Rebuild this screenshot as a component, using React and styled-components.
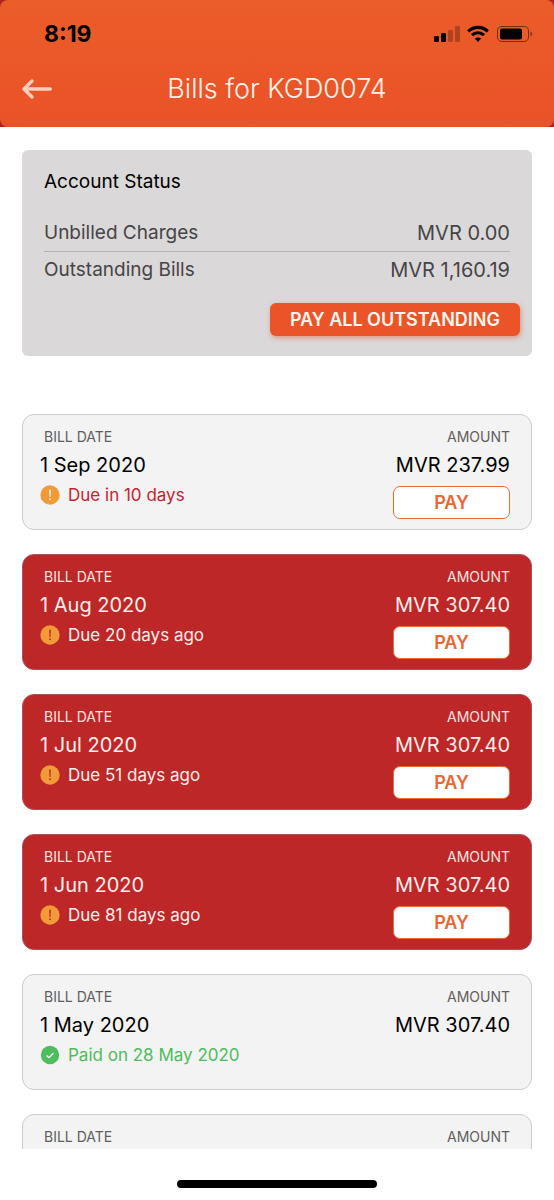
import styled, { createGlobalStyle } from "styled-components";

const GlobalStyle = createGlobalStyle`
  * {
    box-sizing: border-box;
  }

  body {
    margin: 0;
    background: #fff;
    color: #000;
    font-family: Inter, "Liberation Sans", sans-serif;
  }

  h1, h2, ul, dl, dd {
    margin: 0;
    padding: 0;
  }

  button {
    margin: 0;
    font-family: inherit;
    cursor: pointer;
  }
`;

const Screen = styled.div`
  display: flex;
  flex-direction: column;
  height: 100vh;
`;

const HeaderBackdrop = styled.div`
  flex: none;
  background: #b02420;
`;

const Header = styled.header`
  padding-bottom: 14px;
  border-radius: 8px;
  background: linear-gradient(#eb5d29, #ea5228);
`;

const StatusBar = styled.div`
  display: flex;
  align-items: center;
  justify-content: space-between;
  height: 65px;
  padding: 3px 21px 0 44px;
`;

const Clock = styled.span`
  font-size: 23px;
  line-height: 28px;
  font-weight: 700;
`;

const StatusIcons = styled.div`
  display: flex;
  align-items: center;
  gap: 7px;
`;

const NavBar = styled.div`
  display: grid;
  grid-template-columns: 32px 1fr 32px;
  align-items: center;
  height: 48px;
  padding: 0 21px;
`;

const BackButton = styled.button`
  display: flex;
  padding: 0;
  border: none;
  background: none;
  color: #ffcdbd;
`;

const Title = styled.h1`
  font-size: 27px;
  line-height: 36px;
  font-weight: 300;
  text-align: center;
  white-space: nowrap;
  color: #fff3ec;
`;

const Content = styled.main`
  flex: 1;
  min-height: 0;
  overflow: hidden;
  padding: 23px 22px 0;
`;

const AccountPanel = styled.section`
  padding: 18px 22px 20px;
  border-radius: 6px;
  background: #dad8d9;
`;

const PanelTitle = styled.h2`
  margin-bottom: 19px;
  font-size: 19px;
  line-height: 28px;
  font-weight: 400;
`;

const ChargeRow = styled.div`
  display: flex;
  justify-content: space-between;
  padding: 4px 0;
  font-size: 19px;
  line-height: 28px;
  color: #464445;

  & + & {
    border-top: 1px solid #b4b3b4;
  }
`;

const ChargeAmount = styled.dd`
  font-size: 20px;
`;

const PanelActions = styled.div`
  display: flex;
  justify-content: flex-end;
  margin: 15px -10px 0 0;
`;

const PayAllButton = styled.button`
  height: 33px;
  padding: 0 20px;
  border: none;
  border-radius: 6px;
  background: #ea5428;
  box-shadow: 1px 2px 5px rgba(234, 84, 40, 0.5);
  font-size: 18px;
  font-weight: 600;
  white-space: nowrap;
  color: #fff6ef;
`;

const BillList = styled.ul`
  display: flex;
  flex-direction: column;
  gap: 24px;
  margin-top: 58px;
  list-style: none;
`;

const Card = styled.li`
  display: flex;
  justify-content: space-between;
  min-height: 116px;
  padding: 12px 21px 10px 17px;
  border: 1px solid ${({ $overdue }) => ($overdue ? "#b0505a" : "#cdcccd")};
  border-radius: 12px;
  background: ${({ $overdue }) => ($overdue ? "#bd2727" : "#f3f3f3")};
  color: ${({ $overdue }) => ($overdue ? "#ffefec" : "#000")};
`;

const Column = styled.div`
  display: flex;
  flex-direction: column;
  align-items: ${({ $end }) => ($end ? "flex-end" : "flex-start")};
`;

const Label = styled.span`
  padding-left: 4px;
  font-size: 14px;
  line-height: 20px;
  color: ${({ $overdue }) => ($overdue ? "#ffe4e0" : "#5f5d5e")};
`;

const Value = styled.span`
  margin-top: 4px;
  font-size: 20px;
  line-height: 28px;
`;

const statusColors = {
  due: "#bf2530",
  overdue: "#ffefec",
  paid: "#4fbc5e",
};

const Status = styled.span`
  display: flex;
  align-items: center;
  gap: 8px;
  margin-top: 4px;
  font-size: 17px;
  line-height: 24px;
  color: ${({ $status }) => statusColors[$status]};
`;

const PayButton = styled.button`
  width: 117px;
  height: 33px;
  margin-top: 7px;
  padding: 0;
  border: 1px solid #ee6a33;
  border-radius: 7px;
  background: #fff;
  font-size: 18px;
  font-weight: 600;
  color: #ec6530;
`;

const HomeArea = styled.footer`
  display: flex;
  flex: none;
  justify-content: center;
  align-items: flex-end;
  height: 51px;
  padding-bottom: 12px;
`;

const HomeIndicator = styled.div`
  width: 36%;
  height: 8px;
  border-radius: 4px;
  background: #000;
`;

const SignalIcon = () => (
  <svg width="26" height="18" viewBox="0 0 26 18" aria-hidden="true">
    <rect x="0" y="11" width="5" height="6" rx="1.2" />
    <rect x="7" y="8" width="5" height="9" rx="1.2" />
    <rect x="14" y="5" width="5" height="12" rx="1.2" opacity="0.25" />
    <rect x="21" y="1" width="5" height="16" rx="1.2" opacity="0.25" />
  </svg>
);

const WifiIcon = () => (
  <svg width="22" height="18" viewBox="0 0 22 18" fill="none" stroke="#000" aria-hidden="true">
    <path d="M1.2 6.3C6.8 1 15.2 1 20.8 6.3" strokeWidth="3.2" />
    <path d="M5 10.2c3.4-3.2 8.6-3.2 12 0" strokeWidth="3" />
    <path d="M11 17l-3.2-3.4c1.8-1.6 4.6-1.6 6.4 0z" fill="#000" stroke="none" />
  </svg>
);

const BatteryIcon = () => (
  <svg width="37" height="18" viewBox="0 0 37 18" aria-hidden="true">
    <rect x="1.5" y="1.5" width="31" height="15" rx="4.2" fill="none" stroke="#000" strokeOpacity="0.5" />
    <rect x="4" y="3.5" width="22" height="11" rx="2" />
    <path d="M34.5 6.5c2 .8 2 4.2 0 5z" opacity="0.5" />
  </svg>
);

const ArrowIcon = () => (
  <svg
    width="32"
    height="22"
    viewBox="0 0 32 22"
    fill="none"
    stroke="currentColor"
    strokeWidth="3.4"
    strokeLinecap="round"
    strokeLinejoin="round"
    aria-hidden="true"
  >
    <path d="M29.3 11H3.5M11 3L3 11l8 8" />
  </svg>
);

const StatusIcon = ({ status }) => (
  <svg width="20" height="20" viewBox="0 0 20 20" fill="none" aria-hidden="true">
    <circle cx="10" cy="10" r={status === "paid" ? 9.2 : 9.7} fill={status === "paid" ? "#4fbc5e" : "#f19a37"} />
    {status === "paid" ? (
      <path d="M6.6 10.5l2.4 2.2 4.4-4.6" stroke="#fff" strokeWidth="1.2" />
    ) : (
      <g fill={status === "overdue" ? "#bd2727" : "#fff"}>
        <path d="M9.2 4.8h1.6l-.3 7.2h-1z" />
        <circle cx="10" cy="14.2" r="0.9" />
      </g>
    )}
  </svg>
);

const bills = [
  { date: "1 Sep 2020", amount: "MVR 237.99", status: "due", note: "Due in 10 days" },
  { date: "1 Aug 2020", amount: "MVR 307.40", status: "overdue", note: "Due 20 days ago" },
  { date: "1 Jul 2020", amount: "MVR 307.40", status: "overdue", note: "Due 51 days ago" },
  { date: "1 Jun 2020", amount: "MVR 307.40", status: "overdue", note: "Due 81 days ago" },
  { date: "1 May 2020", amount: "MVR 307.40", status: "paid", note: "Paid on 28 May 2020" },
  {},
];

const BillCard = ({ date, amount, status, note }) => {
  const overdue = status === "overdue";

  return (
    <Card $overdue={overdue}>
      <Column>
        <Label $overdue={overdue}>BILL DATE</Label>
        {date && <Value>{date}</Value>}
        {note && (
          <Status $status={status}>
            <StatusIcon status={status} />
            {note}
          </Status>
        )}
      </Column>
      <Column $end>
        <Label $overdue={overdue}>AMOUNT</Label>
        {amount && <Value>{amount}</Value>}
        {(overdue || status === "due") && <PayButton type="button">PAY</PayButton>}
      </Column>
    </Card>
  );
};

const App = () => (
  <Screen>
    <GlobalStyle />
    <HeaderBackdrop>
      <Header>
        <StatusBar>
          <Clock>8:19</Clock>
          <StatusIcons>
            <SignalIcon />
            <WifiIcon />
            <BatteryIcon />
          </StatusIcons>
        </StatusBar>
        <NavBar>
          <BackButton type="button" aria-label="Back">
            <ArrowIcon />
          </BackButton>
          <Title>Bills for KGD0074</Title>
        </NavBar>
      </Header>
    </HeaderBackdrop>
    <Content>
      <AccountPanel>
        <PanelTitle>Account Status</PanelTitle>
        <dl>
          <ChargeRow>
            <dt>Unbilled Charges</dt>
            <ChargeAmount>MVR 0.00</ChargeAmount>
          </ChargeRow>
          <ChargeRow>
            <dt>Outstanding Bills</dt>
            <ChargeAmount>MVR 1,160.19</ChargeAmount>
          </ChargeRow>
        </dl>
        <PanelActions>
          <PayAllButton type="button">PAY ALL OUTSTANDING</PayAllButton>
        </PanelActions>
      </AccountPanel>
      <BillList>
        {bills.map((bill, index) => (
          <BillCard key={index} {...bill} />
        ))}
      </BillList>
    </Content>
    <HomeArea>
      <HomeIndicator />
    </HomeArea>
  </Screen>
);

export default App;
